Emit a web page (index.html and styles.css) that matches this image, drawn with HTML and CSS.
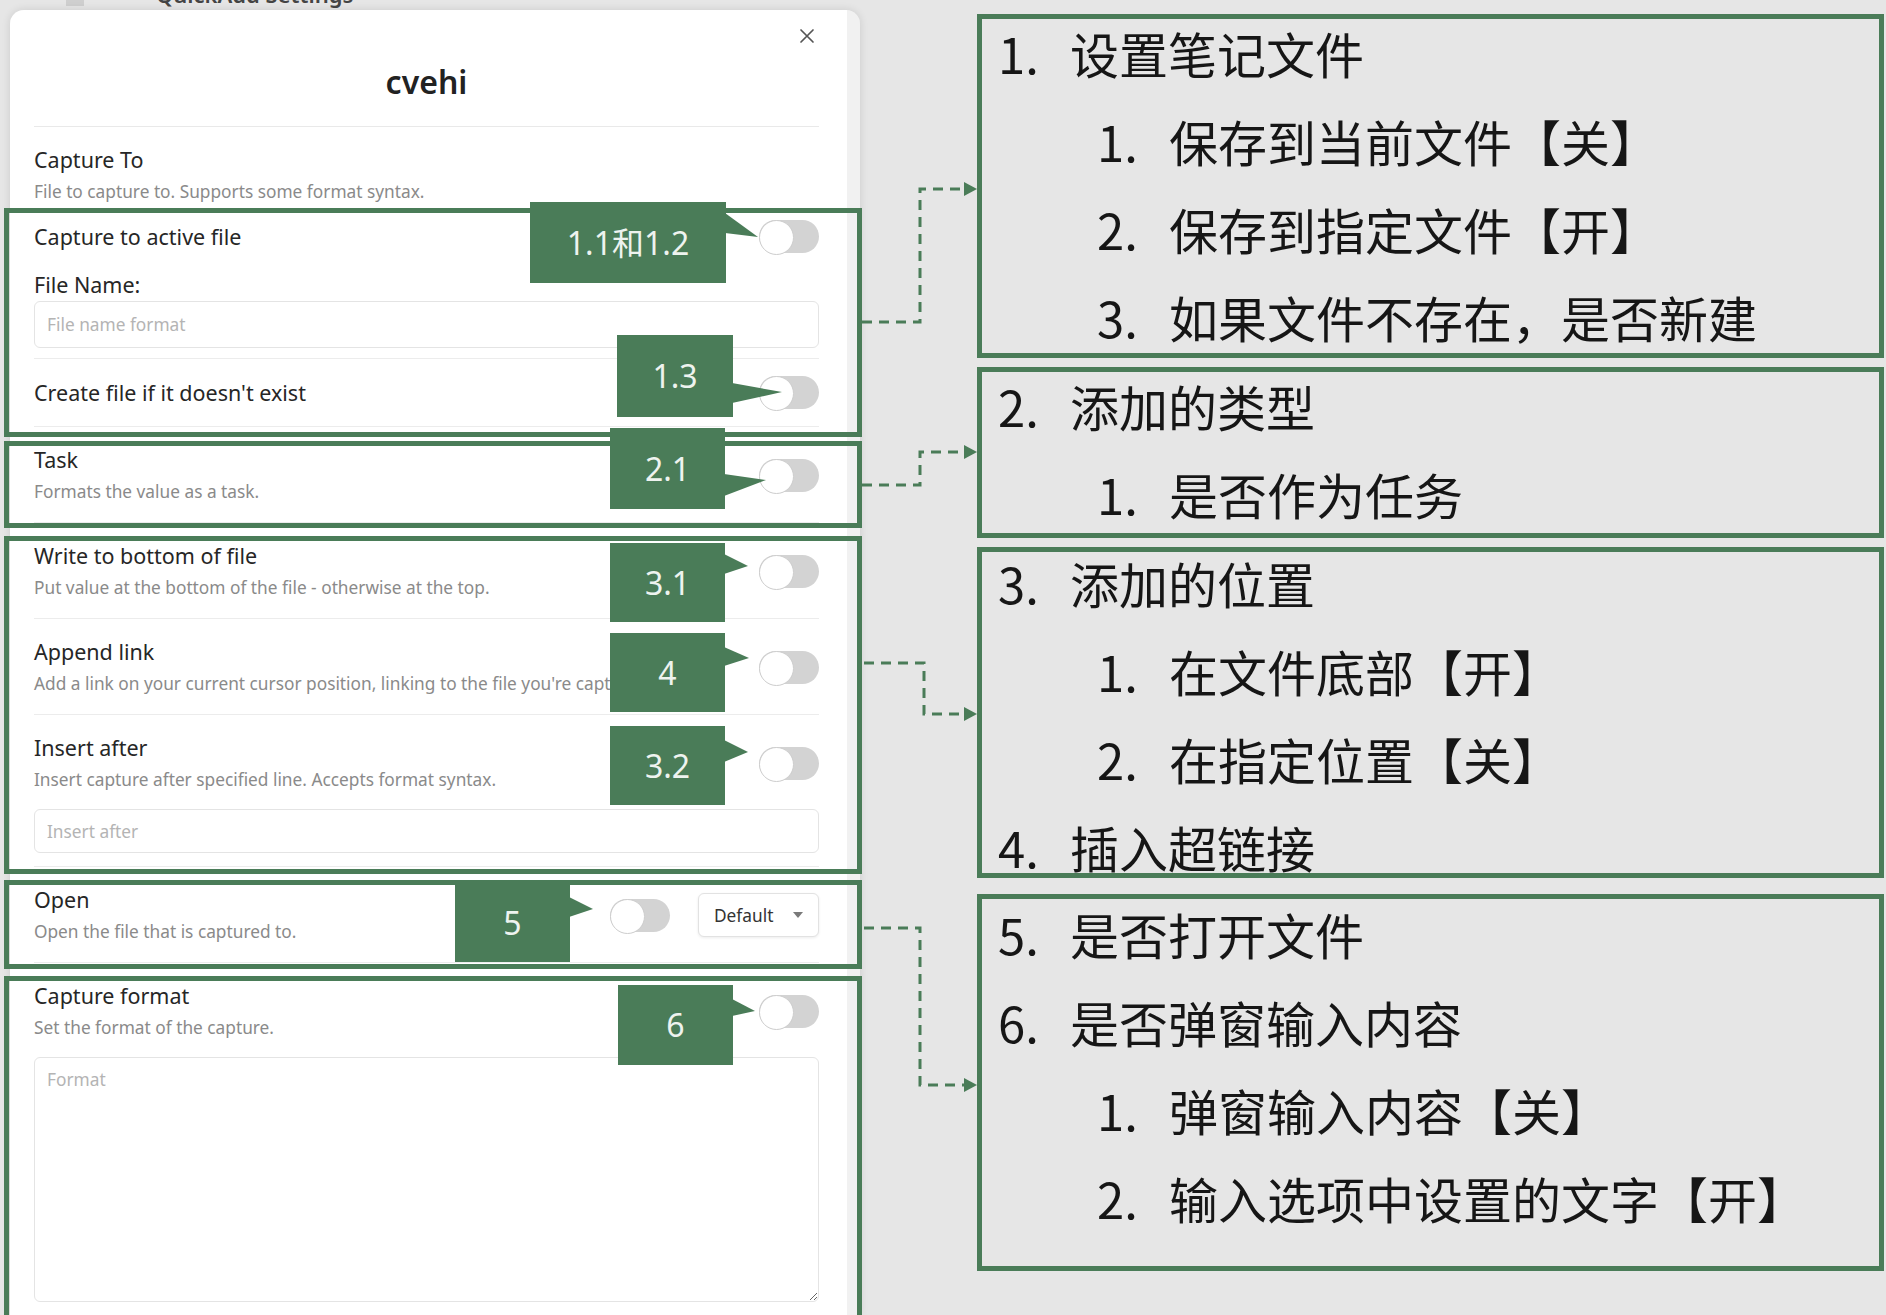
FILE: index.html
```html
<!DOCTYPE html>
<html lang="zh-CN">
<head>
<meta charset="utf-8">
<title>QuickAdd Capture 设置说明</title>
<link rel="stylesheet" href="styles.css">
</head>
<body>
<div class="screen">
  <section class="left">
    <div class="backdrop"><span class="bd-icon"></span><span class="bd-title">QuickAdd Settings</span></div>
    <div class="modal">
      <button class="close" aria-label="Close"><svg viewBox="0 0 18 18" width="18" height="18"><path d="M3 3L15 15M15 3L3 15"/></svg></button>
      <h1 class="modal-title">cvehi</h1>
      <div class="divider"></div>

      <div class="capture-to">
        <div class="name">Capture To</div>
        <div class="desc">File to capture to. Supports some format syntax.</div>
      </div>

      <div class="group g1">
        <div class="inline-row">
          <div class="name">Capture to active file</div>
          <span class="toggle"></span>
        </div>
        <div class="name field-label">File Name:</div>
        <input class="text-input" type="text" placeholder="File name format">
        <div class="row row-single">
          <div class="row-main">
            <div class="name">Create file if it doesn't exist</div>
            <span class="toggle"></span>
          </div>
        </div>
        <div class="callout c11">1.1和1.2<svg class="tail" width="50" height="80"><polygon points="-1,11 32,35 -1,31"/></svg></div>
        <div class="callout c13">1.3<svg class="tail" width="60" height="82"><polygon points="-1,48 49,57 -1,68"/></svg></div>
      </div>

      <div class="group g2">
        <div class="row">
          <div class="row-main">
            <div class="info">
              <div class="name">Task</div>
              <div class="desc">Formats the value as a task.</div>
            </div>
            <span class="toggle"></span>
          </div>
        </div>
        <div class="callout c21">2.1<svg class="tail" width="50" height="81"><polygon points="-1,46 41,52 -1,68"/></svg></div>
      </div>

      <div class="group g3">
        <div class="row">
          <div class="row-main">
            <div class="info">
              <div class="name">Write to bottom of file</div>
              <div class="desc">Put value at the bottom of the file - otherwise at the top.</div>
            </div>
            <span class="toggle"></span>
          </div>
        </div>
        <div class="row">
          <div class="row-main">
            <div class="info">
              <div class="name">Append link</div>
              <div class="desc">Add a link on your current cursor position, linking to the file you're capturing to.</div>
            </div>
            <span class="toggle"></span>
          </div>
        </div>
        <div class="row row-input">
          <div class="row-main">
            <div class="info">
              <div class="name">Insert after</div>
              <div class="desc">Insert capture after specified line. Accepts format syntax.</div>
            </div>
            <span class="toggle"></span>
          </div>
          <input class="text-input short" type="text" placeholder="Insert after">
        </div>
        <div class="callout c31">3.1<svg class="tail" width="40" height="79"><polygon points="-1,11 23,23 -1,31"/></svg></div>
        <div class="callout c4">4<svg class="tail" width="40" height="79"><polygon points="-1,14 24,25 -1,33"/></svg></div>
        <div class="callout c32">3.2<svg class="tail" width="40" height="79"><polygon points="-1,14 23,26 -1,36"/></svg></div>
      </div>

      <div class="group g4">
        <div class="row">
          <div class="row-main">
            <div class="info">
              <div class="name">Open</div>
              <div class="desc">Open the file that is captured to.</div>
            </div>
            <div class="controls">
              <span class="toggle"></span>
              <div class="dropdown"><span>Default</span><svg width="10" height="6"><path d="M0 0H10L5 6Z"/></svg></div>
            </div>
          </div>
        </div>
        <div class="callout c5">5<svg class="tail" width="40" height="79"><polygon points="-1,14 23,26 -1,34"/></svg></div>
      </div>

      <div class="group g5">
        <div class="row row-input">
          <div class="row-main">
            <div class="info">
              <div class="name">Capture format</div>
              <div class="desc">Set the format of the capture.</div>
            </div>
            <span class="toggle"></span>
          </div>
          <textarea class="text-area" placeholder="Format"></textarea>
        </div>
        <div class="callout c6">6<svg class="tail" width="40" height="80"><polygon points="-1,14 22,26 -1,31"/></svg></div>
      </div>
    </div>
  </section>

  <section class="right">
    <div class="note note-a">
      <div class="item"><span class="num">1.</span><span>设置笔记文件</span></div>
      <div class="item sub"><span class="num">1.</span><span>保存到当前文件【关】</span></div>
      <div class="item sub"><span class="num">2.</span><span>保存到指定文件【开】</span></div>
      <div class="item sub"><span class="num">3.</span><span>如果文件不存在，是否新建</span></div>
    </div>
    <div class="note note-b">
      <div class="item"><span class="num">2.</span><span>添加的类型</span></div>
      <div class="item sub"><span class="num">1.</span><span>是否作为任务</span></div>
    </div>
    <div class="note note-c">
      <div class="item"><span class="num">3.</span><span>添加的位置</span></div>
      <div class="item sub"><span class="num">1.</span><span>在文件底部【开】</span></div>
      <div class="item sub"><span class="num">2.</span><span>在指定位置【关】</span></div>
      <div class="item"><span class="num">4.</span><span>插入超链接</span></div>
    </div>
    <div class="note note-d">
      <div class="item"><span class="num">5.</span><span>是否打开文件</span></div>
      <div class="item"><span class="num">6.</span><span>是否弹窗输入内容</span></div>
      <div class="item sub"><span class="num">1.</span><span>弹窗输入内容【关】</span></div>
      <div class="item sub"><span class="num">2.</span><span>输入选项中设置的文字【开】</span></div>
    </div>
  </section>

  <svg class="links" width="1886" height="1315" viewBox="0 0 1886 1315">
    <g class="dash">
      <path d="M862 322H920V189H966"/>
      <path d="M862 485H920V452H966"/>
      <path d="M864 663H924V714H966"/>
      <path d="M864 928H920V1085H966"/>
    </g>
    <g class="heads">
      <polygon points="964,182 977,189 964,196"/>
      <polygon points="964,445 977,452 964,459"/>
      <polygon points="964,707 977,714 964,721"/>
      <polygon points="964,1078 977,1085 964,1092"/>
    </g>
  </svg>
</div>
</body>
</html>
```

FILE: styles.css
```css
* { box-sizing: border-box; }

html, body {
  margin: 0;
  height: 100%;
  overflow: hidden;
}

body {
  background: #e6e6e6;
  font-family: "Noto Sans", "Noto Sans CJK SC", sans-serif;
  color: #222;
}

.screen {
  position: relative;
  display: flex;
  width: 1886px;
  height: 1315px;
}

/* ---------- left: modal screenshot ---------- */
.left {
  width: 870px;
  flex: none;
}

.backdrop {
  display: flex;
  align-items: flex-start;
  height: 10px;
  overflow: hidden;
}

.bd-icon {
  width: 18px;
  height: 6px;
  margin-left: 66px;
  background: #cfcfcf;
}

.bd-title {
  margin-left: 72px;
  margin-top: -17px;
  font-size: 22px;
  line-height: 22px;
  font-weight: 600;
  color: #444;
}

.modal {
  position: relative;
  margin-left: 10px;
  width: 850px;
  height: 1305px;
  padding: 52px 41px 0 24px;
  background: linear-gradient(to right, #fff 837px, #f1f1f1 837px);
  border-radius: 14px 14px 0 0;
  box-shadow: 0 0 8px rgba(0, 0, 0, 0.12);
}

.close {
  position: absolute;
  top: 17px;
  right: 44px;
  width: 18px;
  height: 18px;
  padding: 0;
  border: 0;
  background: none;
}

.close svg path {
  stroke: #555;
  stroke-width: 1.7;
  stroke-linecap: round;
  fill: none;
}

.modal-title {
  margin: 0;
  text-align: center;
  font-size: 32px;
  line-height: 40px;
  font-weight: 600;
  color: #222;
}

.divider {
  height: 1px;
  margin-top: 24px;
  background: #e9e9e9;
}

.capture-to {
  padding-top: 18px;
}

.name {
  font-size: 21.5px;
  line-height: 30px;
  color: #262626;
  white-space: nowrap;
}

.desc {
  margin-top: 4px;
  font-size: 17.3px;
  line-height: 26px;
  color: #8a8a8a;
  white-space: nowrap;
}

.group {
  position: relative;
}

.group::after {
  content: "";
  position: absolute;
  left: -30px;
  right: -43px;
  border: 5px solid #4a7c58;
  pointer-events: none;
  z-index: 2;
}

.g1 { padding-top: 15px; }
.g1::after { top: 3px; bottom: -11px; }
.g2::after { top: 15px; bottom: -6px; }
.g3::after { top: 14px; bottom: -8px; }
.g4::after { top: 14px; bottom: -7px; }
.g5::after { top: 14px; bottom: -400px; }

.inline-row {
  display: flex;
  align-items: center;
  justify-content: space-between;
  height: 33px;
  margin-bottom: 2px;
}

.field-label {
  margin-top: 17px;
}

.text-input {
  display: block;
  width: 100%;
  height: 47px;
  margin: 1px 0 0;
  padding: 0 12px;
  border: 1px solid #e4e4e4;
  border-radius: 6px;
  background: #fff;
  font-family: "Noto Sans", sans-serif;
  font-size: 17.3px;
  color: #222;
  outline: none;
}

.text-input::placeholder,
.text-area::placeholder {
  color: #b4b4b4;
}

.text-input.short {
  height: 44px;
  margin-top: 16px;
}

.row {
  border-top: 1px solid #ececec;
  padding: 18px 0 17px;
}

.g1 .row {
  margin-top: 10px;
  padding-top: 17px;
  padding-bottom: 17px;
}

.row.row-input {
  padding-bottom: 13px;
}

.row-main {
  display: flex;
  align-items: center;
  justify-content: space-between;
  gap: 20px;
}

.row-single .row-main {
  height: 33px;
}

.info {
  min-width: 0;
}

.controls {
  display: flex;
  align-items: center;
  gap: 28px;
}

.toggle {
  position: relative;
  flex: none;
  width: 60px;
  height: 33px;
  border-radius: 17px;
  background: #d3d3d3;
}

.toggle::before {
  content: "";
  position: absolute;
  left: 0;
  top: 0;
  width: 33px;
  height: 33px;
  border-radius: 50%;
  background: #fff;
  border: 1.5px solid #cdcdcd;
}

.dropdown {
  display: flex;
  align-items: center;
  justify-content: space-between;
  width: 121px;
  height: 44px;
  padding: 0 15px 0 15px;
  border: 1px solid #e2e2e2;
  border-radius: 6px;
  background: #fff;
  box-shadow: 0 1px 3px rgba(0, 0, 0, 0.08);
  font-size: 17.3px;
  color: #333;
}

.dropdown svg path {
  fill: #7a7a7a;
}

.text-area {
  display: block;
  width: 100%;
  height: 245px;
  margin-top: 16px;
  padding: 10px 12px;
  border: 1px solid #e4e4e4;
  border-radius: 6px;
  background: #fff;
  font-family: "Noto Sans", sans-serif;
  font-size: 17.3px;
  line-height: 24px;
  color: #222;
  resize: vertical;
  outline: none;
}

/* callout labels */
.callout {
  position: absolute;
  z-index: 3;
  display: flex;
  align-items: center;
  justify-content: center;
  background: #4a7c58;
  color: #eef3ef;
  font-family: "Noto Sans", "Noto Sans CJK SC", sans-serif;
  font-size: 32px;
  line-height: 1;
}

.callout .tail {
  position: absolute;
  left: 100%;
  top: 0;
  overflow: visible;
}

.callout .tail polygon {
  fill: #4a7c58;
}

.c11 { left: 496px; top: -3px;  width: 196px; height: 81px; }
.c13 { left: 583px; top: 130px; width: 116px; height: 82px; }
.c21 { left: 576px; top: 2px;   width: 115px; height: 81px; }
.c31 { left: 576px; top: 21px;  width: 115px; height: 79px; }
.c4  { left: 576px; top: 111px; width: 115px; height: 79px; }
.c32 { left: 576px; top: 204px; width: 115px; height: 79px; }
.c5  { left: 421px; top: 17px;  width: 115px; height: 79px; }
.c6  { left: 584px; top: 23px;  width: 115px; height: 80px; }

/* ---------- right: notes ---------- */
.right {
  flex: none;
  width: 907px;
  margin-left: 107px;
  padding-top: 14px;
}

.note {
  border: 5px solid #4a7c58;
  padding: 0 0 0 16px;
  overflow: hidden;
}

.note-a { height: 344px; padding-top: 3px; }
.note-b { height: 171px; margin-top: 9px; padding-top: 3px; }
.note-c { height: 331px; margin-top: 9px; padding-top: 0; }
.note-d { height: 377px; margin-top: 16px; padding-top: 4px; }

.item {
  display: flex;
  height: 62px;
  margin-bottom: 26px;
  font-family: "Noto Sans CJK SC", sans-serif;
  font-size: 49px;
  line-height: 62px;
  color: #161616;
  white-space: nowrap;
}

.item:last-child {
  margin-bottom: 0;
}

.item .num {
  flex: none;
  width: 72px;
}

.item.sub {
  padding-left: 99px;
}

/* connectors */
.links {
  position: absolute;
  left: 0;
  top: 0;
  z-index: 5;
  pointer-events: none;
}

.links .dash path {
  fill: none;
  stroke: #4a7c58;
  stroke-width: 3;
  stroke-dasharray: 10 7;
}

.links .heads polygon {
  fill: #4a7c58;
}
```
